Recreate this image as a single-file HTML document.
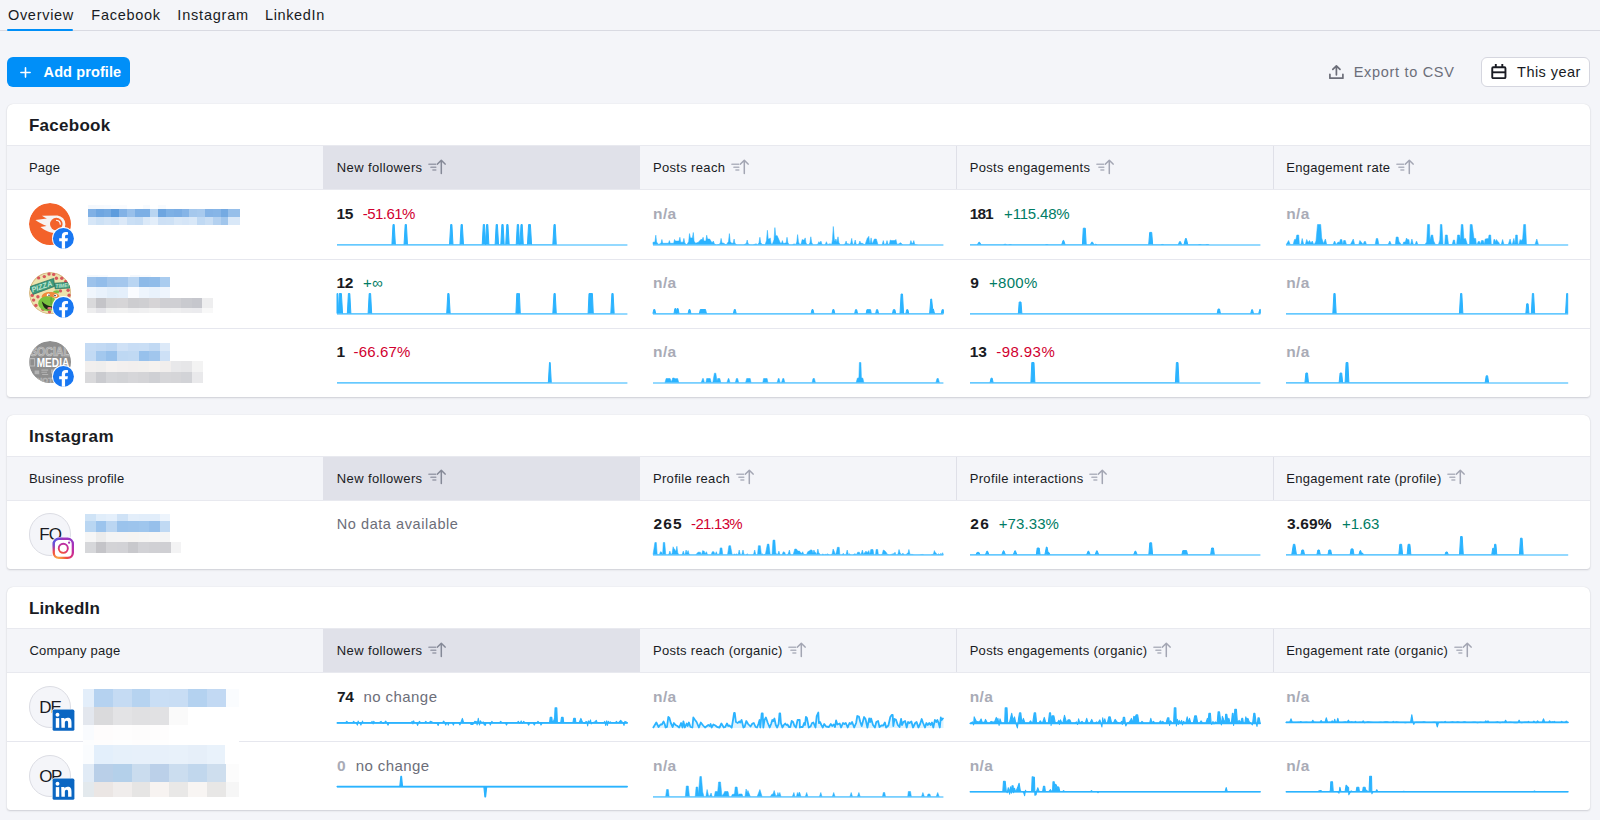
<!DOCTYPE html>
<html lang="en"><head><meta charset="utf-8"><title>Social Analytics – Overview</title>
<style>
*{box-sizing:border-box;margin:0;padding:0}
html,body{width:1600px;height:820px;overflow:hidden}
body{background:#f4f5f9;font-family:"Liberation Sans",sans-serif;color:#191b23;position:relative}
button{font-family:inherit;cursor:pointer}
.abs{position:absolute;white-space:nowrap}
.t{position:absolute;white-space:nowrap}
.b{font-weight:bold}
.tabs{position:absolute;left:0;top:0;width:1600px;height:31px;border-bottom:1px solid #d9dae2}
.tabs .on-line{position:absolute;left:7px;width:66.3px;top:29px;height:2px;background:#008ff8;border-radius:1px}
.btn-add{position:absolute;left:7px;top:57px;width:123.2px;height:30px;border-radius:6px;background:#008ff8;color:#fff;border:0}
.btn-year{position:absolute;left:1481px;top:57px;width:109px;height:30px;border-radius:6px;background:#fff;border:1px solid #d5d6df}
.card{position:absolute;left:6.9px;width:1583.4px;background:#fff;border-radius:6px 6px 3px 3px;box-shadow:0 1px 2px rgba(25,27,35,.16),0 0 1px rgba(25,27,35,.14)}
.thead{position:absolute;left:0;top:41.2px;width:100%;height:45px;background:#f4f5f9;border-top:1px solid #e8e9ef;border-bottom:1px solid #e8e9ef}
.th{position:absolute;top:0;height:43px;border-left:1px solid #dfe0e8}
.th.first{border-left:0}
.th.sorted{background:#e0e1e9;border-left:0}
.th.nb{border-left-color:transparent}
.row{position:absolute;left:0;width:100%;height:69.2px;border-top:1px solid #e6e7ee}
.row.r0{border-top:0}
.red{color:#d1002f}.grn{color:#007c65}.gry{color:#6c6e79}.na{color:#a9abb6}
.spark{position:absolute;overflow:visible}
.av{position:absolute;border-radius:50%}
.av.txt{background:#f4f5f9;border:1px solid #dcdde4}
.badge{position:absolute}
.blur{position:absolute}
</style></head><body><svg width="0" height="0" style="position:absolute"><defs><clipPath id="ab"><rect x="-2" y="-3" width="300" height="23.500"/></clipPath></defs></svg>
<nav class="tabs">
<a class="t" style="left:7.92px;top:5.10px;font-size:14.5px;line-height:20px;height:20px;letter-spacing:0.711px">Overview</a>
<a class="t" style="left:91.37px;top:5.10px;font-size:14.5px;line-height:20px;height:20px;letter-spacing:0.718px">Facebook</a>
<a class="t" style="left:177.37px;top:5.10px;font-size:14.5px;line-height:20px;height:20px;letter-spacing:0.789px">Instagram</a>
<a class="t" style="left:264.97px;top:5.10px;font-size:14.5px;line-height:20px;height:20px;letter-spacing:0.632px">LinkedIn</a>
<i class="on-line"></i>
</nav>
<button class="btn-add"><svg class="abs" style="left:13.1px;top:9.6px" width="11" height="11" viewBox="0 0 11 11"><path d="M5.500 .9v9.200M.9 5.500h9.200" stroke="#fff" stroke-width="1.600" stroke-linecap="round"/></svg><span class="t b" style="left:36.57px;top:5.10px;font-size:14.5px;line-height:20px;height:20px;letter-spacing:0.107px">Add profile</span></button>
<div class="abs" style="left:1328px;top:62px;width:130px;height:20px;color:#6c6e79"><svg class="abs" style="left:0;top:2px" width="17" height="16" viewBox="0 0 17 16"><g fill="none" stroke="#6c6e79" stroke-width="1.7" stroke-linecap="round" stroke-linejoin="round"><path d="M1.900 10.300v3.900h13v-3.900"/><path d="M8.400 10.800V1.800M4.800 5.400l3.600-3.600 3.600 3.600"/></g></svg><span class="t" style="left:25.67px;top:0.10px;font-size:14.5px;line-height:20px;height:20px;letter-spacing:0.699px">Export to CSV</span></div>
<button class="btn-year"><svg class="abs" style="left:9px;top:5px" width="17" height="18" viewBox="0 0 17 18"><g fill="none" stroke="#191b23" stroke-width="1.9" stroke-linejoin="round"><rect x="1.250" y="4.200" width="13.200" height="10.950" rx="1"/><path d="M1.250 9.300h13.200"/><path d="M4.800 .9v3.300M11.300 .9v3.300"/></g></svg><span class="t" style="left:35.07px;top:4.10px;font-size:14.5px;line-height:20px;height:20px;letter-spacing:0.459px;color:#191b23">This year</span></button>
<section class="card" style="top:104px;height:292.9px"><h2 style="font-weight:normal;font-size:inherit"><span class="t b" style="left:22.04px;top:10.10px;font-size:17px;line-height:23px;height:23px;letter-spacing:0.271px">Facebook</span></h2><div class="thead"><div class="th first" style="left:0px;width:316.4px"><span class="t" style="left:22.08px;top:11.90px;font-size:13px;line-height:19px;height:19px;letter-spacing:0.194px">Page</span></div><div class="th sorted" style="left:316.4px;width:316.5px"><span class="t" style="left:13.58px;top:11.90px;font-size:13px;line-height:19px;height:19px;letter-spacing:0.359px">New followers</span><svg class="abs" style="left:104.6px;top:12.7px" width="19" height="16" viewBox="0 0 19 16"><g fill="none" stroke-linecap="round" stroke-linejoin="round"><path d="M.9 5.300h6.900M2.900 8.200h4.900M4.900 11.100h2.900" stroke="#9a9dab" stroke-width="1.500"/><path d="M13.300 14.600V1.400M9.500 5.100l3.800-3.900 3.800 3.900" stroke="#858997" stroke-width="1.500"/></g></svg></div><div class="th nb" style="left:632.9px;width:316.7px"><span class="t" style="left:12.18px;top:11.90px;font-size:13px;line-height:19px;height:19px;letter-spacing:0.340px">Posts reach</span><svg class="abs" style="left:90.1px;top:12.7px" width="19" height="16" viewBox="0 0 19 16"><g fill="none" stroke-linecap="round" stroke-linejoin="round"><path d="M.9 5.300h6.900M2.900 8.200h4.900M4.900 11.100h2.900" stroke="#b0b3bf" stroke-width="1.500"/><path d="M13.300 14.600V1.400M9.500 5.100l3.800-3.900 3.800 3.900" stroke="#a3a6b3" stroke-width="1.500"/></g></svg></div><div class="th" style="left:949.6px;width:316.5px"><span class="t" style="left:12.18px;top:11.90px;font-size:13px;line-height:19px;height:19px;letter-spacing:0.339px">Posts engagements</span><svg class="abs" style="left:138.7px;top:12.7px" width="19" height="16" viewBox="0 0 19 16"><g fill="none" stroke-linecap="round" stroke-linejoin="round"><path d="M.9 5.300h6.900M2.900 8.200h4.900M4.900 11.100h2.900" stroke="#b0b3bf" stroke-width="1.500"/><path d="M13.300 14.600V1.400M9.500 5.100l3.800-3.900 3.800 3.900" stroke="#a3a6b3" stroke-width="1.500"/></g></svg></div><div class="th" style="left:1266.1px;width:317.2px"><span class="t" style="left:12.18px;top:11.90px;font-size:13px;line-height:19px;height:19px;letter-spacing:0.301px">Engagement rate</span><svg class="abs" style="left:122.2px;top:12.7px" width="19" height="16" viewBox="0 0 19 16"><g fill="none" stroke-linecap="round" stroke-linejoin="round"><path d="M.9 5.300h6.900M2.900 8.200h4.900M4.900 11.100h2.900" stroke="#b0b3bf" stroke-width="1.500"/><path d="M13.300 14.600V1.400M9.500 5.100l3.800-3.900 3.800 3.900" stroke="#a3a6b3" stroke-width="1.500"/></g></svg></div></div><div class="row r0" style="top:86.2px"><div class="abs" style="left:0;top:-0.5px"><svg class="av" style="left:21.8px;top:13.1px" width="42.3" height="42.3" viewBox="0 0 42.3 42.3"><defs><clipPath id="avc"><circle cx="21.15" cy="21.15" r="21.15"/></clipPath></defs><g clip-path="url(#avc)"><rect width="43" height="43" fill="#f3622a"/><path d="M12.9 12.7L28.4 12.4A8.9 8.9 0 0 1 36.4 21.3A8.8 8.8 0 0 1 27.6 30.3C22 30.3 15.6 27.6 11.4 24.1L17.6 22.9C13.6 21.6 9.6 19.4 6.4 17L17.9 15.6C16.2 14.8 14.4 13.8 12.9 12.7Z" fill="#f7f3f1"/><circle cx="27.3" cy="21.1" r="6.3" fill="#f3622a"/><path d="M27.6 17.3a4 4 0 0 1 3.7 3.9" fill="none" stroke="#fbeee8" stroke-width="1.3" stroke-linecap="round"/></g></svg><svg class="badge" style="left:45.0px;top:36.9px" width="22.8" height="22.8" viewBox="0 0 24 24"><circle cx="12" cy="12" r="12" fill="#fff"/><circle cx="12" cy="12" r="11.05" fill="#1877f2"/><path d="M13.750 23v-8h2.550l.48-3.100h-3.030v-2c0-.85.420-1.680 1.750-1.680h1.380v-2.640s-1.250-.21-2.440-.21c-2.490 0-4.120 1.510-4.120 4.240v2.290h-2.770v3.100h2.770v8z" fill="#fff"/></svg><i class="blur" style="left:80.8px;top:15.8px;width:78.0px;height:3.6px;background:linear-gradient(90deg,#f4f8fd 0.0px 7.8px,#f6f9fd 7.8px 15.6px,#f7fafe 15.6px 23.4px,#fbfcfe 23.4px 31.2px,#f9fbfe 31.2px 39.0px,#ffffff 39.0px 46.8px,#ffffff 46.8px 54.6px,#f8fbfe 54.6px 62.4px,#ffffff 62.4px 70.2px,#f8fbfe 70.2px 78.0px)"></i><i class="blur" style="left:80.8px;top:19.3px;width:152.1px;height:8.2px;background:linear-gradient(90deg,#7fb0e5 0.0px 7.8px,#6ea6e1 7.8px 15.6px,#74aae2 15.6px 23.4px,#5d9cdd 23.4px 31.2px,#82b2e6 31.2px 39.0px,#98c0eb 39.0px 46.8px,#7cafe5 46.8px 54.6px,#7cafe5 54.6px 62.4px,#b9d5f1 62.4px 70.2px,#6da5e0 70.2px 78.0px,#7db0e5 78.0px 85.8px,#7aade4 85.8px 93.6px,#85b4e7 93.6px 101.4px,#a5c8ed 101.4px 109.2px,#a8caee 109.2px 117.0px,#84b3e6 117.0px 124.8px,#86b5e7 124.8px 132.6px,#74aae2 132.6px 140.4px,#96bfea 140.4px 148.2px,#96bfea 148.2px 152.1px)"></i><i class="blur" style="left:80.8px;top:27.5px;width:152.1px;height:7.5px;background:linear-gradient(90deg,#d6e6f7 0.0px 7.8px,#cde1f5 7.8px 15.6px,#d3e4f6 15.6px 23.4px,#cfe2f6 23.4px 31.2px,#dce9f8 31.2px 39.0px,#cadff5 39.0px 46.8px,#c7ddf4 46.8px 54.6px,#dbe9f8 54.6px 62.4px,#e3eefa 62.4px 70.2px,#cde0f5 70.2px 78.0px,#cee1f5 78.0px 85.8px,#d8e7f7 85.8px 93.6px,#d5e5f7 93.6px 101.4px,#d9e8f8 101.4px 109.2px,#c0d9f3 109.2px 117.0px,#c9def4 117.0px 124.8px,#b4d1f0 124.8px 132.6px,#a1c6ec 132.6px 140.4px,#d9e8f8 140.4px 148.2px,#d9e8f8 148.2px 152.1px)"></i></div><span class="t b" style="left:329.73px;top:12.90px;font-size:15.5px;line-height:21px;height:21px;letter-spacing:-0.586px">15</span><span class="t red" style="left:355.93px;top:12.90px;font-size:15px;line-height:21px;height:21px;letter-spacing:-0.542px">-51.61%</span><svg class="spark" style="left:329.7px;top:33.6px" width="291" height="29" viewBox="0 0 291 29"><path d="M0.0 21.0L54.9 21.0L56.0 0.5L57.2 0.5L58.4 21.0L67.0 21.0L68.2 0.5L69.4 0.5L70.5 21.0L112.5 21.0L113.7 0.5L114.9 0.5L116.0 21.0L123.0 21.0L124.1 0.5L125.3 0.5L126.5 21.0L145.2 21.0L146.3 0.5L147.5 0.5L148.6 21.0L148.5 21.0L149.6 0.5L150.8 0.5L151.9 21.0L158.1 21.0L159.2 0.5L160.4 0.5L161.6 21.0L163.8 21.0L164.9 0.5L166.1 0.5L167.2 21.0L168.7 21.0L169.8 0.5L171.0 0.5L172.2 21.0L179.2 21.0L180.3 0.5L181.5 0.5L182.6 21.0L182.9 21.0L184.0 0.5L185.2 0.5L186.3 21.0L190.4 21.0L191.6 0.5L193.4 0.5L194.6 21.0L215.8 21.0L217.0 0.5L218.2 0.5L219.3 21.0L219.3 21L0.0 21Z" fill="#2bb3ff" stroke="#2bb3ff" stroke-width="1.0" stroke-linejoin="round" clip-path="url(#ab)"/><path d="M0 21H290.4" stroke="#2bb3ff" stroke-width="1.2" fill="none"/></svg><span class="t b na" style="left:646.23px;top:12.90px;font-size:15.5px;line-height:21px;height:21px;letter-spacing:0.338px">n/a</span><svg class="spark" style="left:646.2px;top:33.6px" width="291" height="29" viewBox="0 0 291 29"><path d="M-0.0 18.2L1.9 18.1L2.8 11.2L3.6 18.1L5.6 20.4L8.0 19.3L8.9 15.5L9.7 19.3L11.7 19.3L15.5 19.3L16.4 16.6L17.2 19.3L18.7 19.3L20.7 19.3L21.5 15.5L22.4 17.1L23.9 17.1L26.0 17.1L26.9 13.3L27.7 18.2L29.0 18.2L30.1 18.2L30.9 14.4L31.8 19.0L33.7 21.0L35.7 17.6L36.5 9.6L37.4 13.9L38.4 13.9L39.4 13.9L40.3 8.5L41.1 17.2L42.6 19.3L45.4 18.2L47.8 15.5L49.3 15.5L50.1 13.3L51.0 17.1L52.0 17.1L52.8 17.1L53.7 11.2L54.5 15.0L55.3 15.0L56.7 15.0L58.6 18.2L59.6 18.2L60.4 17.1L61.3 19.8L63.3 21.0L66.1 20.4L67.3 19.0L68.1 14.4L69.0 19.0L70.8 19.3L73.1 21.0L75.5 17.6L76.4 9.6L77.2 17.6L78.7 19.3L80.2 19.2L81.1 15.0L81.9 19.2L83.9 21.0L87.2 20.9L90.4 21.0L93.3 19.5L94.2 16.0L95.0 19.5L97.0 20.9L99.8 21.0L103.1 19.8L104.5 20.9L106.0 18.7L106.9 13.3L107.7 18.7L109.2 20.4L112.0 21.0L113.5 16.6L114.4 6.3L115.2 15.0L115.8 15.0L116.3 15.0L117.2 13.9L118.0 18.9L119.0 21.0L121.0 15.8L121.9 3.6L122.7 11.7L124.2 11.7L126.5 17.1L127.5 19.3L128.5 19.3L129.4 16.6L130.2 19.3L131.7 19.3L133.2 18.7L134.0 13.3L134.9 18.7L136.4 21.0L139.2 20.9L141.1 19.8L142.5 21.0L143.8 17.9L144.6 10.6L145.5 17.9L146.9 21.0L148.3 19.3L149.2 15.5L150.0 16.0L150.6 16.0L151.3 16.0L152.2 13.9L153.0 18.9L154.4 20.9L155.8 20.9L157.0 18.5L157.8 12.8L158.7 18.5L160.0 21.0L163.3 21.0L165.0 20.0L165.9 17.7L166.8 19.3L167.9 17.1L168.8 19.8L169.8 21.0L171.7 21.0L172.5 20.0L173.4 17.7L174.2 20.0L175.0 20.4L176.9 19.8L178.7 20.4L179.5 15.5L180.3 2.5L181.5 17.1L182.1 17.1L182.9 15.0L183.9 18.2L185.0 12.8L185.9 18.5L187.2 20.9L190.4 20.9L192.2 19.8L193.1 17.1L193.9 19.8L195.1 19.8L197.0 20.4L197.8 19.0L198.7 14.4L199.5 19.0L200.3 21.0L201.3 19.5L202.2 16.0L203.0 19.5L204.0 21.0L206.0 19.8L206.9 17.1L207.7 19.3L209.2 19.3L212.0 20.9L214.4 13.9L214.9 13.9L215.8 12.3L216.6 18.4L217.2 19.3L218.1 13.9L219.0 18.9L219.5 19.3L221.4 15.0L223.3 15.0L225.1 21.0L228.9 21.0L229.4 19.7L230.3 16.6L231.1 19.7L231.7 20.4L233.2 19.7L234.0 16.6L234.9 19.7L235.4 20.4L236.5 19.5L237.3 16.0L238.2 16.6L239.7 16.6L242.1 16.6L242.9 15.5L243.8 19.3L244.8 20.4L247.6 18.7L250.0 21.0L251.9 21.0L253.7 21.0L256.5 21.0L257.1 19.7L257.9 16.6L258.8 19.3L259.4 19.3L259.9 19.3L260.8 16.6L261.6 19.7L262.6 20.9L264.5 21.0L264.5 21L-0.0 21Z" fill="#2bb3ff" stroke="#2bb3ff" stroke-width="0.55" stroke-linejoin="round" clip-path="url(#ab)"/><path d="M0 21H290.4" stroke="#2bb3ff" stroke-width="1.2" fill="none"/></svg><span class="t b" style="left:962.93px;top:12.90px;font-size:15.5px;line-height:21px;height:21px;letter-spacing:-1.003px">181</span><span class="t grn" style="left:997.20px;top:12.90px;font-size:15px;line-height:21px;height:21px;letter-spacing:-0.188px">+115.48%</span><svg class="spark" style="left:962.9px;top:33.6px" width="291" height="29" viewBox="0 0 291 29"><path d="M0.0 21.0L7.2 21.0L8.9 18.2L9.5 18.2L11.2 21.0L33.1 21.0L34.8 20.3L35.4 20.3L37.1 21.0L38.1 21.0L39.8 20.5L40.4 20.5L42.1 21.0L74.8 21.0L76.5 20.5L77.1 20.5L78.8 21.0L91.6 21.0L93.1 16.4L93.7 16.4L95.2 21.0L112.4 21.0L113.3 4.2L115.3 4.2L116.2 21.0L120.3 21.0L121.6 18.2L122.6 18.2L123.9 21.0L124.3 21.0L125.5 20.3L126.1 20.3L127.3 21.0L178.7 21.0L179.7 8.4L181.7 8.4L182.7 21.0L190.4 21.0L192.1 20.5L192.7 20.5L194.4 21.0L208.3 21.0L209.5 17.7L210.5 17.7L211.7 21.0L213.9 21.0L215.5 14.5L216.3 14.5L217.9 21.0L227.9 21.0L229.6 20.5L230.2 20.5L231.9 21.0L235.3 21.0L237.0 20.5L237.6 20.5L239.3 21.0L239.3 21L0.0 21Z" fill="#2bb3ff" stroke="#2bb3ff" stroke-width="1.0" stroke-linejoin="round" clip-path="url(#ab)"/><path d="M0 21H290.4" stroke="#2bb3ff" stroke-width="1.2" fill="none"/></svg><span class="t b na" style="left:1279.43px;top:12.90px;font-size:15.5px;line-height:21px;height:21px;letter-spacing:0.338px">n/a</span><svg class="spark" style="left:1279.4px;top:33.6px" width="283" height="29" viewBox="0 0 283 29"><path d="M0.0 21.0L2.6 16.5L4.3 20.7L7.1 20.7L8.5 15.5L9.9 15.5L10.8 11.0L12.7 11.0L13.4 20.5L14.9 20.5L16.2 14.5L17.7 20.5L19.3 20.5L20.7 15.5L22.1 18.5L23.5 16.5L24.9 19.0L26.3 17.0L27.7 20.5L28.6 20.0L30.0 17.0L31.5 0.5L34.7 0.5L35.7 14.0L37.5 19.5L39.4 15.0L40.8 20.7L46.9 20.7L48.6 17.0L50.2 20.5L52.1 18.0L53.5 18.5L54.4 15.5L55.8 15.5L56.8 20.5L57.7 16.5L59.3 16.5L60.5 20.7L64.3 20.7L67.3 15.0L68.7 20.7L72.7 20.7L73.9 16.5L76.0 19.0L77.1 20.5L78.3 17.5L79.5 17.5L80.5 20.7L89.1 20.7L90.3 14.5L91.7 14.5L93.0 20.7L102.0 20.7L103.8 17.0L105.5 20.7L109.3 20.7L110.2 13.0L112.1 13.0L113.0 17.5L115.4 20.7L116.8 20.7L117.7 18.0L119.3 18.0L120.5 14.0L121.9 16.0L122.9 15.5L123.6 20.5L124.5 20.5L125.9 15.0L127.4 20.7L129.0 20.7L130.5 17.0L132.0 20.7L138.8 20.7L140.7 18.0L141.6 0.5L143.5 0.5L143.9 16.0L145.3 11.0L146.7 11.0L147.7 17.0L149.5 20.7L152.4 20.7L153.8 16.0L154.4 0.5L155.9 0.5L157.0 20.5L158.7 20.5L159.4 11.0L161.3 11.0L162.5 20.5L166.2 20.5L167.4 16.0L168.5 16.0L169.4 20.5L170.6 20.5L171.6 11.0L173.5 11.0L174.4 16.0L175.3 0.5L176.9 0.5L177.9 15.0L179.5 14.5L181.4 20.5L183.5 20.5L184.2 0.5L186.1 0.5L188.0 14.5L189.7 14.5L190.3 20.0L191.3 20.0L192.2 17.5L193.6 17.5L194.5 20.2L195.5 16.5L197.2 16.5L198.3 20.2L199.2 15.0L202.5 14.5L203.0 11.0L204.7 11.0L205.3 20.5L207.2 20.5L207.9 15.5L208.8 15.5L209.5 18.0L210.5 15.5L211.4 17.0L212.8 18.5L213.8 20.7L215.2 20.7L216.6 15.5L218.0 20.7L222.2 20.7L224.1 15.0L225.5 20.5L226.4 20.0L227.8 14.5L229.0 20.0L229.7 11.0L231.3 11.0L232.0 20.5L233.0 20.0L234.1 15.5L235.3 17.0L236.7 14.5L237.7 0.5L239.5 0.5L240.5 20.7L248.9 20.7L250.8 15.0L252.5 20.7L252.5 21L0.0 21Z" fill="#2bb3ff" stroke="#2bb3ff" stroke-width="0.55" stroke-linejoin="round" clip-path="url(#ab)"/><path d="M0 21H282.2" stroke="#2bb3ff" stroke-width="1.2" fill="none"/></svg></div><div class="row r1" style="top:154.6px"><div class="abs" style="left:0;top:-0.7px"><svg class="av" style="left:21.8px;top:13.1px" width="42.3" height="42.3" viewBox="0 0 42.3 42.3"><defs><clipPath id="avc"><circle cx="21.15" cy="21.15" r="21.15"/></clipPath></defs><g clip-path="url(#avc)"><rect width="43" height="43" fill="#ece4ad"/><circle cx="21.15" cy="21.15" r="20.6" fill="none" stroke="#d9b98a" stroke-width="1.2"/><circle cx="24.7" cy="2.4" r="1.7" fill="#d8585c"/><circle cx="15.3" cy="4.6" r="1.7" fill="#d8585c"/><circle cx="9.6" cy="5.9" r="1.7" fill="#d8585c"/><circle cx="27.4" cy="6.3" r="1.7" fill="#d8585c"/><circle cx="32.8" cy="6.3" r="1.7" fill="#d8585c"/><circle cx="36.8" cy="9.5" r="1.7" fill="#d8585c"/><circle cx="39.1" cy="18.3" r="1.7" fill="#d8585c"/><circle cx="40.1" cy="23.2" r="1.7" fill="#d8585c"/><circle cx="4.6" cy="28.1" r="1.7" fill="#d8585c"/><circle cx="6.9" cy="33.4" r="1.7" fill="#d8585c"/><circle cx="14" cy="37.3" r="1.7" fill="#d8585c"/><circle cx="8.9" cy="24.7" r="1.7" fill="#d8585c"/><circle cx="3.2" cy="23.4" r="1.7" fill="#d8585c"/><circle cx="31.4" cy="18.9" r="1.7" fill="#d8585c"/><circle cx="20.5" cy="39.8" r="1.7" fill="#d8585c"/><circle cx="35.5" cy="27" r="1.7" fill="#d8585c"/><circle cx="2.4" cy="16.5" r="1.7" fill="#d8585c"/><circle cx="20" cy="2" r="1.7" fill="#d8585c"/><path d="M.4 14.8L24.7 6.4L25.6 14.4L4.2 22.4Z" fill="#3c9a7c" stroke="#2f6f5c" stroke-width=".7"/><path d="M25.4 11.2L41.2 10.2L41.2 16L26.2 16.9Z" fill="#3c9a7c" stroke="#2f6f5c" stroke-width=".7"/><text transform="translate(3.4 20.6) rotate(-19)" font-family="Liberation Sans,sans-serif" font-weight="bold" font-style="italic" font-size="7.6" fill="#bfe5d2" textLength="21.5" lengthAdjust="spacingAndGlyphs">PIZZA</text><text transform="translate(26.6 15.9) rotate(-3.5)" font-family="Liberation Sans,sans-serif" font-weight="bold" font-style="italic" font-size="5.6" fill="#bfe5d2" textLength="13.6" lengthAdjust="spacingAndGlyphs">TIME!</text><path d="M23.6 20.6c1.2-2.2 4.4-3 7-1.6l-1.2 2.4z" fill="#7bc043"/><path d="M12.6 24.8c.6-3.2 3.6-4.8 8.4-4.8s8.400 1.400 9.400 4.200l-.6 2.400c-5-1.600-11.800-1.600-16.600.400z" fill="#ef8a3c"/><ellipse cx="19.4" cy="23.100" rx="1.7" ry="1.5" fill="#fff"/><ellipse cx="26.500" cy="23.400" rx="1.700" ry="1.500" fill="#fff"/><circle cx="20" cy="23.300" r=".7" fill="#222"/><circle cx="26" cy="23.600" r=".8" fill="#222"/><ellipse cx="18.600" cy="31.600" rx="9.400" ry="7.400" fill="#7ac23f"/><path d="M22.1 25.500v7.500" stroke="#5f9a36" stroke-width="1"/><path d="M12.800 29.200c3 3.400 7.600 5.400 11.600 5.400c-1.200 2.200-3.400 3.200-5.600 3c-3-.4-5.200-4-6-8.400z" fill="#1f2a18"/><ellipse cx="20.600" cy="36.200" rx="2.300" ry="1.200" fill="#e8737c"/></g></svg><svg class="badge" style="left:45.0px;top:36.9px" width="22.8" height="22.8" viewBox="0 0 24 24"><circle cx="12" cy="12" r="12" fill="#fff"/><circle cx="12" cy="12" r="11.05" fill="#1877f2"/><path d="M13.750 23v-8h2.550l.48-3.100h-3.030v-2c0-.85.420-1.680 1.750-1.680h1.380v-2.640s-1.250-.21-2.440-.21c-2.490 0-4.120 1.510-4.120 4.240v2.290h-2.770v3.100h2.770v8z" fill="#fff"/></svg><i class="blur" style="left:80.2px;top:15.9px;width:64.2px;height:2.5px;background:linear-gradient(90deg,#f3f8fd 0.0px 10.7px,#f7fafe 10.7px 21.4px,#ffffff 21.4px 32.1px,#ffffff 32.1px 42.8px,#f4f8fd 42.8px 53.5px,#f9fbfe 53.5px 64.2px)"></i><i class="blur" style="left:80.2px;top:18.3px;width:83.1px;height:9.6px;background:linear-gradient(90deg,#9cc2eb 0.0px 8.8px,#93bdea 8.8px 19.5px,#a3c6ec 19.5px 30.2px,#a4c7ed 30.2px 40.9px,#b9d5f2 40.9px 51.6px,#8dbae8 51.6px 62.3px,#90bce9 62.3px 73.0px,#aaccef 73.0px 83.1px)"></i><i class="blur" style="left:80.2px;top:27.9px;width:83.1px;height:11.0px;background:linear-gradient(90deg,#f0f6fd 0.0px 8.8px,#e9f2fc 8.8px 19.5px,#e2eefa 19.5px 30.2px,#e4effb 30.2px 40.9px,#fafcff 40.9px 51.6px,#eef5fd 51.6px 62.3px,#e9f2fc 62.3px 73.0px,#eff5fd 73.0px 83.1px)"></i><i class="blur" style="left:80.2px;top:38.9px;width:125.5px;height:10.5px;background:linear-gradient(90deg,#d9d9db 0.0px 8.8px,#c4c4c8 8.8px 19.5px,#d4d4d6 19.5px 30.2px,#d6d5d7 30.2px 40.9px,#cdcdd0 40.9px 51.6px,#cfcfd2 51.6px 62.3px,#d6d4d6 62.3px 73.0px,#cfcfd3 73.0px 83.7px,#cfcfd3 83.7px 94.4px,#c9cacf 94.4px 105.1px,#c6c7cd 105.1px 115.1px,#eeeeef 115.1px 125.5px)"></i><i class="blur" style="left:80.2px;top:49.4px;width:125.5px;height:5.2px;background:linear-gradient(90deg,#ededee 0.0px 8.8px,#e4e4e8 8.8px 19.5px,#eff0f0 19.5px 30.2px,#f1f1f1 30.2px 40.9px,#eeeeef 40.9px 51.6px,#f0f0f1 51.6px 62.3px,#f3f3f3 62.3px 73.0px,#eeeeef 73.0px 83.7px,#efeff0 83.7px 94.4px,#ececee 94.4px 105.1px,#ebebee 105.1px 115.1px,#f8f8f8 115.1px 125.5px)"></i></div><span class="t b" style="left:329.73px;top:12.50px;font-size:15.5px;line-height:21px;height:21px;letter-spacing:-0.586px">12</span><span class="t grn" style="left:356.00px;top:12.50px;font-size:15px;line-height:21px;height:21px;letter-spacing:0.365px">+∞</span><svg class="spark" style="left:329.7px;top:33.4px" width="291" height="29" viewBox="0 0 291 29"><path d="M0.0 21.0L0.0 0.5L0.7 0.5L1.5 20.0L2.3 0.5L4.4 0.5L5.6 21.0L10.3 21.0L11.4 0.5L12.8 0.5L13.9 21.0L31.1 21.0L32.2 0.5L33.6 0.5L34.7 21.0L109.7 21.0L110.8 0.5L112.0 0.5L113.2 21.0L178.9 21.0L179.8 0.5L180.8 0.5L181.7 21.0L180.5 21.0L181.4 0.5L182.4 0.5L183.3 21.0L215.8 21.0L217.0 0.5L218.2 0.5L219.3 21.0L251.1 21.0L252.0 0.5L255.4 0.5L256.3 21.0L273.8 21.0L274.9 0.5L276.1 0.5L277.2 21.0L277.2 21L0.0 21Z" fill="#2bb3ff" stroke="#2bb3ff" stroke-width="1.0" stroke-linejoin="round" clip-path="url(#ab)"/><path d="M0 21H290.4" stroke="#2bb3ff" stroke-width="1.2" fill="none"/></svg><span class="t b na" style="left:646.23px;top:12.50px;font-size:15.5px;line-height:21px;height:21px;letter-spacing:0.338px">n/a</span><svg class="spark" style="left:646.2px;top:33.4px" width="291" height="29" viewBox="0 0 291 29"><path d="M0.0 21.0L-0.2 21.0L0.8 16.5L1.8 16.5L2.8 21.0L20.9 21.0L21.9 15.6L22.9 15.6L23.9 21.0L23.1 21.0L24.1 15.6L25.1 15.6L26.1 21.0L35.0 21.0L36.0 16.5L37.0 16.5L38.0 21.0L46.3 21.0L47.3 16.5L52.5 16.5L53.5 21.0L80.3 21.0L81.3 16.5L82.3 16.5L83.3 21.0L158.0 21.0L159.0 16.5L160.0 16.5L161.0 21.0L178.9 21.0L179.9 16.5L180.9 16.5L181.9 21.0L201.6 21.0L202.5 16.7L203.7 16.7L204.6 21.0L213.1 21.0L213.9 16.7L217.5 16.7L218.3 21.0L222.6 21.0L223.5 16.7L224.7 16.7L225.6 21.0L239.4 21.0L240.3 16.7L241.9 16.7L242.8 21.0L247.0 21.0L248.1 1.0L249.5 1.0L250.6 21.0L252.8 21.0L253.7 16.7L254.9 16.7L255.8 21.0L276.6 21.0L277.8 6.0L278.6 6.0L279.6 15.6L280.4 16.0L281.6 21.0L288.2 21.0L289.1 16.7L290.4 16.7L290.4 21.0L290.4 21L0.0 21Z" fill="#2bb3ff" stroke="#2bb3ff" stroke-width="1.0" stroke-linejoin="round" clip-path="url(#ab)"/><path d="M0 21H290.4" stroke="#2bb3ff" stroke-width="1.2" fill="none"/></svg><span class="t b" style="left:963.42px;top:12.50px;font-size:15.5px;line-height:21px;height:21px">9</span><span class="t grn" style="left:982.20px;top:12.50px;font-size:15px;line-height:21px;height:21px;letter-spacing:0.281px">+800%</span><svg class="spark" style="left:962.9px;top:33.4px" width="291" height="29" viewBox="0 0 291 29"><path d="M0.0 21.0L48.3 21.0L49.2 9.0L51.0 9.0L51.9 21.0L247.1 21.0L248.1 16.0L249.5 16.0L250.5 21.0L280.6 21.0L281.7 16.7L282.5 16.7L283.6 21.0L288.6 21.0L289.8 16.4L290.3 16.4L290.3 21.0L290.3 21L0.0 21Z" fill="#2bb3ff" stroke="#2bb3ff" stroke-width="1.0" stroke-linejoin="round" clip-path="url(#ab)"/><path d="M0 21H290.4" stroke="#2bb3ff" stroke-width="1.2" fill="none"/></svg><span class="t b na" style="left:1279.43px;top:12.50px;font-size:15.5px;line-height:21px;height:21px;letter-spacing:0.338px">n/a</span><svg class="spark" style="left:1279.4px;top:33.4px" width="283" height="29" viewBox="0 0 283 29"><path d="M0.0 21.0L46.8 21.0L47.9 0.5L49.1 0.5L50.2 21.0L173.4 21.0L174.6 0.5L175.8 0.5L176.9 21.0L239.8 21.0L240.7 10.8L242.1 10.8L243.0 21.0L245.3 21.0L246.4 0.5L247.6 0.5L248.7 21.0L279.5 21.0L280.7 0.5L281.7 0.5L281.7 21.0L281.7 21L0.0 21Z" fill="#2bb3ff" stroke="#2bb3ff" stroke-width="1.0" stroke-linejoin="round" clip-path="url(#ab)"/><path d="M0 21H282.2" stroke="#2bb3ff" stroke-width="1.2" fill="none"/></svg></div><div class="row r2" style="top:223.9px"><div class="abs" style="left:0;top:-0.8px"><svg class="av" style="left:21.8px;top:13.1px" width="42.3" height="42.3" viewBox="0 0 42.3 42.3"><defs><clipPath id="avc"><circle cx="21.15" cy="21.15" r="21.15"/></clipPath></defs><g clip-path="url(#avc)"><rect width="43" height="43" fill="#8e8e8e"/><text x="1.0" y="14.7" font-family="Liberation Sans,sans-serif" font-weight="bold" font-size="12.2" fill="#9f9f9f" stroke="#c6c6c6" stroke-width=".7" textLength="40" lengthAdjust="spacingAndGlyphs">SOCIAL</text><text x="7.7" y="26.1" font-family="Liberation Sans,sans-serif" font-weight="bold" font-size="13.1" fill="#fff" textLength="32.6" lengthAdjust="spacingAndGlyphs">MEDIA</text><path d="M.8 17.6h4.8v7.400h-4.800z" fill="none" stroke="#b9b9b9" stroke-width="1.1"/><path d="M5.600 29.600h4.600v3.600h-4.600zM12.400 28.600h6.800v1.100h-6.800zM12.400 30.700h5.600v1.100h-5.600zM13.200 32.900h6v1h-6zM22 28.600h3.400v4h-3.400z" fill="#b3b3b3"/><text x="7.800" y="41.600" font-family="Liberation Sans,sans-serif" font-weight="bold" font-size="7.400" fill="#aaa" stroke="#bdbdbd" stroke-width=".4" textLength="16" lengthAdjust="spacingAndGlyphs">NOT</text></g></svg><svg class="badge" style="left:45.0px;top:36.9px" width="22.8" height="22.8" viewBox="0 0 24 24"><circle cx="12" cy="12" r="12" fill="#fff"/><circle cx="12" cy="12" r="11.05" fill="#1877f2"/><path d="M13.750 23v-8h2.550l.48-3.100h-3.030v-2c0-.85.420-1.680 1.750-1.680h1.380v-2.640s-1.250-.21-2.440-.21c-2.490 0-4.120 1.510-4.120 4.240v2.290h-2.770v3.100h2.770v8z" fill="#fff"/></svg><i class="blur" style="left:78.0px;top:15.1px;width:85.6px;height:7.8px;background:linear-gradient(90deg,#c5dbf4 0.0px 10.7px,#c2d9f3 10.7px 21.4px,#bdd6f2 21.4px 32.1px,#cfe1f6 32.1px 42.8px,#c8ddf5 42.8px 53.5px,#c9def5 53.5px 64.2px,#c1d9f3 64.2px 74.9px,#dce9f8 74.9px 85.6px)"></i><i class="blur" style="left:78.0px;top:22.9px;width:85.6px;height:10.5px;background:linear-gradient(90deg,#c2daf4 0.0px 10.7px,#a3c8ee 10.7px 21.4px,#96c0eb 21.4px 32.1px,#bed8f3 32.1px 42.8px,#c0d9f3 42.8px 53.5px,#97c1ec 53.5px 64.2px,#a1c6ed 64.2px 74.9px,#cde0f6 74.9px 85.6px)"></i><i class="blur" style="left:78.0px;top:33.4px;width:117.7px;height:10.8px;background:linear-gradient(90deg,#f1efee 0.0px 10.7px,#efeeed 10.7px 21.4px,#f5f2f0 21.4px 32.1px,#f3f0ef 32.1px 42.8px,#f2efee 42.8px 53.5px,#f2f0ee 53.5px 64.2px,#f5f2ef 64.2px 74.9px,#f1eeed 74.9px 85.6px,#e8e8ea 85.6px 96.3px,#e6e6e8 96.3px 107.0px,#f3f3f3 107.0px 117.7px)"></i><i class="blur" style="left:78.0px;top:44.2px;width:117.7px;height:10.5px;background:linear-gradient(90deg,#d9d9db 0.0px 10.7px,#cacbcf 10.7px 21.4px,#d4d5d8 21.4px 32.1px,#d2d3d6 32.1px 42.8px,#d6d6d9 42.8px 53.5px,#d4d4d7 53.5px 64.2px,#cfd0d4 64.2px 74.9px,#d6d6d9 74.9px 85.6px,#d5d5d8 85.6px 96.3px,#d2d3d7 96.3px 107.0px,#e9e9eb 107.0px 117.7px)"></i></div><span class="t b" style="left:329.73px;top:12.20px;font-size:15.5px;line-height:21px;height:21px">1</span><span class="t red" style="left:346.63px;top:12.20px;font-size:15px;line-height:21px;height:21px;letter-spacing:0.158px">-66.67%</span><svg class="spark" style="left:329.7px;top:33.3px" width="291" height="29" viewBox="0 0 291 29"><path d="M0.0 21.0L211.3 21.0L212.5 0.5L213.2 0.5L214.3 21.0L214.3 21L0.0 21Z" fill="#2bb3ff" stroke="#2bb3ff" stroke-width="1.0" stroke-linejoin="round" clip-path="url(#ab)"/><path d="M0 21H290.4" stroke="#2bb3ff" stroke-width="1.2" fill="none"/></svg><span class="t b na" style="left:646.23px;top:12.20px;font-size:15.5px;line-height:21px;height:21px;letter-spacing:0.338px">n/a</span><svg class="spark" style="left:646.2px;top:33.3px" width="291" height="29" viewBox="0 0 291 29"><path d="M11.9 21.0L13.1 16.5L17.1 16.5L18.4 20.0L19.7 16.0L21.3 16.0L22.0 16.8L24.6 16.5L25.9 21.0L48.1 21.0L49.7 16.5L50.3 16.5L51.5 21.0L52.8 21.0L53.7 16.5L57.2 16.5L58.4 21.0L59.7 21.0L61.4 11.2L62.8 11.2L64.0 19.0L64.7 16.5L66.8 16.5L67.9 21.0L73.8 21.0L75.3 16.5L75.9 16.5L77.1 21.0L82.2 21.0L83.4 16.5L84.6 16.5L85.8 21.0L92.5 21.0L93.7 16.5L97.2 16.5L98.1 21.0L109.7 21.0L110.6 16.5L114.1 16.5L115.0 21.0L124.0 21.0L125.3 16.5L126.1 16.5L127.2 21.0L128.4 21.0L129.8 16.5L130.8 16.5L131.9 21.0L159.0 21.0L160.0 16.5L161.4 16.5L162.5 21.0L203.1 21.0L204.3 16.2L205.9 15.8L206.4 0.5L207.9 0.5L208.4 15.8L209.9 16.2L210.9 21.0L282.8 21.0L284.0 16.5L285.3 16.5L286.5 21.0L286.5 21L11.9 21Z" fill="#2bb3ff" stroke="#2bb3ff" stroke-width="0.55" stroke-linejoin="round" clip-path="url(#ab)"/><path d="M0 21H290.4" stroke="#2bb3ff" stroke-width="1.2" fill="none"/></svg><span class="t b" style="left:962.93px;top:12.20px;font-size:15.5px;line-height:21px;height:21px;letter-spacing:-0.286px">13</span><span class="t red" style="left:989.43px;top:12.20px;font-size:15px;line-height:21px;height:21px;letter-spacing:0.424px">-98.93%</span><svg class="spark" style="left:962.9px;top:33.3px" width="291" height="29" viewBox="0 0 291 29"><path d="M0.0 21.0L20.0 21.0L21.0 16.2L22.2 16.2L23.2 21.0L60.9 21.0L61.8 0.5L64.0 0.5L64.9 21.0L205.4 21.0L206.4 0.5L208.0 0.5L209.0 21.0L209.0 21L0.0 21Z" fill="#2bb3ff" stroke="#2bb3ff" stroke-width="1.0" stroke-linejoin="round" clip-path="url(#ab)"/><path d="M0 21H290.4" stroke="#2bb3ff" stroke-width="1.2" fill="none"/></svg><span class="t b na" style="left:1279.43px;top:12.20px;font-size:15.5px;line-height:21px;height:21px;letter-spacing:0.338px">n/a</span><svg class="spark" style="left:1279.4px;top:33.3px" width="283" height="29" viewBox="0 0 283 29"><path d="M0.0 21.0L18.9 21.0L19.9 11.0L21.5 11.0L22.5 21.0L53.1 21.0L54.1 11.0L55.7 11.0L56.7 21.0L59.1 21.0L60.1 0.5L61.9 0.5L62.9 21.0L199.1 21.0L200.2 13.8L201.6 13.8L202.7 21.0L202.7 21L0.0 21Z" fill="#2bb3ff" stroke="#2bb3ff" stroke-width="1.0" stroke-linejoin="round" clip-path="url(#ab)"/><path d="M0 21H282.2" stroke="#2bb3ff" stroke-width="1.2" fill="none"/></svg></div></section>
<section class="card" style="top:414.5px;height:154.5px"><h2 style="font-weight:normal;font-size:inherit"><span class="t b" style="left:22.04px;top:10.60px;font-size:17px;line-height:23px;height:23px;letter-spacing:0.419px">Instagram</span></h2><div class="thead"><div class="th first" style="left:0px;width:316.4px"><span class="t" style="left:22.08px;top:12.40px;font-size:13px;line-height:19px;height:19px;letter-spacing:0.232px">Business profile</span></div><div class="th sorted" style="left:316.4px;width:316.5px"><span class="t" style="left:13.58px;top:12.40px;font-size:13px;line-height:19px;height:19px;letter-spacing:0.359px">New followers</span><svg class="abs" style="left:104.6px;top:12.7px" width="19" height="16" viewBox="0 0 19 16"><g fill="none" stroke-linecap="round" stroke-linejoin="round"><path d="M.9 5.300h6.900M2.900 8.200h4.900M4.900 11.100h2.900" stroke="#9a9dab" stroke-width="1.500"/><path d="M13.300 14.600V1.400M9.500 5.100l3.800-3.900 3.800 3.900" stroke="#858997" stroke-width="1.500"/></g></svg></div><div class="th nb" style="left:632.9px;width:316.7px"><span class="t" style="left:12.18px;top:12.40px;font-size:13px;line-height:19px;height:19px;letter-spacing:0.314px">Profile reach</span><svg class="abs" style="left:94.8px;top:12.7px" width="19" height="16" viewBox="0 0 19 16"><g fill="none" stroke-linecap="round" stroke-linejoin="round"><path d="M.9 5.300h6.900M2.900 8.200h4.900M4.900 11.100h2.900" stroke="#b0b3bf" stroke-width="1.500"/><path d="M13.300 14.600V1.400M9.500 5.100l3.800-3.900 3.800 3.900" stroke="#a3a6b3" stroke-width="1.500"/></g></svg></div><div class="th" style="left:949.6px;width:316.5px"><span class="t" style="left:12.18px;top:12.40px;font-size:13px;line-height:19px;height:19px;letter-spacing:0.346px">Profile interactions</span><svg class="abs" style="left:131.9px;top:12.7px" width="19" height="16" viewBox="0 0 19 16"><g fill="none" stroke-linecap="round" stroke-linejoin="round"><path d="M.9 5.300h6.900M2.900 8.200h4.900M4.900 11.100h2.900" stroke="#b0b3bf" stroke-width="1.500"/><path d="M13.300 14.600V1.400M9.500 5.100l3.800-3.900 3.800 3.900" stroke="#a3a6b3" stroke-width="1.500"/></g></svg></div><div class="th" style="left:1266.1px;width:317.2px"><span class="t" style="left:12.18px;top:12.40px;font-size:13px;line-height:19px;height:19px;letter-spacing:0.320px">Engagement rate (profile)</span><svg class="abs" style="left:173.2px;top:12.7px" width="19" height="16" viewBox="0 0 19 16"><g fill="none" stroke-linecap="round" stroke-linejoin="round"><path d="M.9 5.300h6.900M2.900 8.200h4.900M4.900 11.100h2.900" stroke="#b0b3bf" stroke-width="1.500"/><path d="M13.300 14.600V1.400M9.500 5.100l3.800-3.900 3.800 3.900" stroke="#a3a6b3" stroke-width="1.500"/></g></svg></div></div><div class="row r0" style="top:86.2px"><div class="abs" style="left:0;top:-0.5px"><div class="av txt" style="left:21.8px;top:13.1px;width:42.3px;height:42.3px"><span class="t" style="left:9.62px;top:8.80px;font-size:17px;line-height:23px;height:23px;letter-spacing:-0.941px">FO</span></div><svg class="badge" style="left:45.4px;top:36.4px" width="22.600" height="22.600" viewBox="0 0 22.600 22.600"><defs><radialGradient id="igg" gradientUnits="userSpaceOnUse" cx="5.500" cy="24.500" r="27"><stop offset="0" stop-color="#fdc35a"/><stop offset=".12" stop-color="#fba645"/><stop offset=".34" stop-color="#f1553b"/><stop offset=".56" stop-color="#d72d80"/><stop offset=".76" stop-color="#b42fb0"/><stop offset="1" stop-color="#8a38c8"/></radialGradient><radialGradient id="igb" gradientUnits="userSpaceOnUse" cx="-1" cy="1.500" r="13"><stop offset="0" stop-color="#3d62f2"/><stop offset=".55" stop-color="#5458e4" stop-opacity=".75"/><stop offset="1" stop-color="#6a4fd8" stop-opacity="0"/></radialGradient></defs><rect x="0" y="0" width="22.600" height="22.600" rx="6.400" fill="#fff"/><rect x="1.750" y="1.750" width="19.100" height="19.100" rx="5.100" fill="#fff" stroke="url(#igg)" stroke-width="2.300"/><circle cx="11.300" cy="11.300" r="4.550" fill="none" stroke="url(#igg)" stroke-width="1.900"/><circle cx="17.100" cy="5.700" r="1.150" fill="url(#igg)"/><rect x="1.750" y="1.750" width="19.100" height="19.100" rx="5.100" fill="none" stroke="url(#igb)" stroke-width="2.300"/><circle cx="11.300" cy="11.300" r="4.550" fill="none" stroke="url(#igb)" stroke-width="1.900"/><circle cx="17.100" cy="5.700" r="1.150" fill="url(#igb)"/></svg><i class="blur" style="left:78.0px;top:13.6px;width:85.6px;height:7.5px;background:linear-gradient(90deg,#cfe3f6 0.0px 10.7px,#e0edfa 10.7px 21.4px,#e4effb 21.4px 32.1px,#cfe2f6 32.1px 42.8px,#e3eefa 42.8px 53.5px,#e1edfa 53.5px 64.2px,#e1edfa 64.2px 74.9px,#edf4fc 74.9px 85.6px)"></i><i class="blur" style="left:78.0px;top:21.1px;width:85.6px;height:10.5px;background:linear-gradient(90deg,#b9d6f2 0.0px 10.7px,#9cc4ed 10.7px 21.4px,#bbd6f2 21.4px 32.1px,#9bc3ec 32.1px 42.8px,#9dc4ec 42.8px 53.5px,#9fc6ed 53.5px 64.2px,#97c0eb 64.2px 74.9px,#c0d9f3 74.9px 85.6px)"></i><i class="blur" style="left:78.0px;top:31.6px;width:85.6px;height:10.5px;background:linear-gradient(90deg,#f6f6f6 0.0px 10.7px,#ececec 10.7px 21.4px,#f4f4f4 21.4px 32.1px,#f5f4f4 32.1px 42.8px,#f6f4f2 42.8px 53.5px,#f6f5f4 53.5px 64.2px,#f7f6f5 64.2px 74.9px,#f5f5f5 74.9px 85.6px)"></i><i class="blur" style="left:78.0px;top:42.1px;width:96.3px;height:10.5px;background:linear-gradient(90deg,#d6d7da 0.0px 10.7px,#c4c4c8 10.7px 21.4px,#d3d3d6 21.4px 32.1px,#d2d2d6 32.1px 42.8px,#c8c8cc 42.8px 53.5px,#d2d2d6 53.5px 64.2px,#d0d0d4 64.2px 74.9px,#cfcfd3 74.9px 85.6px,#f3f3f4 85.6px 96.3px)"></i></div><span class="t gry" style="left:329.87px;top:13.40px;font-size:14.5px;line-height:20px;height:20px;letter-spacing:0.567px">No data available</span><span class="t b" style="left:646.72px;top:12.40px;font-size:15.5px;line-height:21px;height:21px;letter-spacing:1.055px">265</span><span class="t red" style="left:684.23px;top:12.40px;font-size:15px;line-height:21px;height:21px;letter-spacing:-0.726px">-21.13%</span><svg class="spark" style="left:646.2px;top:33.6px" width="291" height="29" viewBox="0 0 291 29"><path d="M-0.0 21.0L1.9 8.5L3.3 8.5L4.2 20.4L6.1 20.9L6.6 20.0L7.5 17.7L8.7 18.2L9.6 20.9L10.3 8.5L11.7 8.5L12.8 21.0L15.4 21.0L16.0 19.8L16.9 17.1L17.7 19.8L18.4 20.9L19.3 18.5L20.1 12.8L21.0 15.0L21.5 15.0L22.5 17.1L23.0 17.1L23.9 12.3L24.7 18.4L25.8 21.0L28.6 21.0L29.4 19.8L30.3 17.1L31.1 19.8L31.6 20.4L32.2 19.5L33.1 16.0L34.0 19.3L35.1 16.6L36.0 19.7L37.0 21.0L42.6 21.0L45.0 18.2L47.3 18.2L48.3 20.4L48.8 19.7L49.7 16.6L50.5 17.1L51.1 17.1L52.0 19.3L52.6 19.3L53.4 17.7L54.3 20.0L54.8 20.9L58.1 20.9L59.3 17.7L60.9 17.7L61.9 20.4L62.4 20.0L63.3 17.7L64.1 20.0L64.7 20.4L66.5 19.8L67.2 13.9L68.9 13.9L69.8 20.9L71.2 20.9L72.6 21.0L74.5 21.0L75.9 11.7L77.5 11.7L79.2 21.0L80.6 20.9L81.5 19.8L82.5 20.9L83.4 19.8L84.8 21.0L85.4 19.5L86.2 16.0L87.1 19.5L87.6 21.0L88.6 21.0L89.1 19.5L90.0 16.0L90.8 19.5L91.4 21.0L92.8 21.0L94.2 19.8L95.6 21.0L99.8 21.0L100.8 19.5L101.7 16.0L102.5 19.5L103.1 21.0L104.5 21.0L105.4 11.7L107.3 11.7L108.4 20.4L109.2 19.8L110.6 21.0L112.5 19.8L114.4 10.1L115.9 10.1L117.2 20.4L119.0 21.0L120.0 6.1L121.9 6.1L122.8 19.3L124.2 20.4L125.0 19.8L125.9 17.1L126.7 19.8L127.2 20.9L128.4 21.0L129.4 20.0L130.3 17.7L131.1 18.2L131.7 18.2L132.6 21.0L134.0 21.0L135.4 19.3L136.4 16.0L137.2 19.5L137.8 21.0L140.1 21.0L141.8 15.0L143.4 15.0L144.8 17.1L146.7 17.1L146.9 17.7L148.3 19.3L148.8 19.3L149.7 17.7L150.5 20.0L151.1 20.4L153.4 20.9L154.8 17.7L156.2 17.1L157.6 16.0L159.0 16.0L160.0 19.3L160.9 16.0L161.8 18.2L162.3 18.2L163.7 20.4L164.9 15.0L165.8 19.2L166.3 19.3L167.5 21.0L168.9 21.0L169.8 19.8L170.9 21.0L172.2 20.4L173.6 20.4L175.0 19.8L175.9 21.0L178.3 21.0L179.3 19.2L180.1 15.0L181.1 17.1L182.5 21.0L183.7 17.1L184.4 13.3L186.2 13.3L186.9 21.0L189.0 21.0L190.3 19.3L191.4 21.0L192.8 21.0L193.3 19.5L194.2 16.0L195.3 20.4L196.5 19.8L197.8 21.0L199.8 21.0L201.7 19.8L203.6 20.4L204.7 18.2L206.4 18.2L207.3 20.4L208.4 19.3L209.4 16.0L210.6 20.4L211.5 18.7L212.1 18.7L212.9 17.1L213.8 18.2L214.4 18.2L214.9 18.2L215.8 16.6L216.7 20.4L217.8 15.5L220.0 15.5L220.9 21.0L222.5 21.0L223.1 15.5L224.7 15.5L225.3 20.4L227.5 20.9L228.9 20.4L229.4 19.5L230.3 16.0L231.5 16.6L233.1 18.2L234.5 20.4L236.4 21.0L238.3 20.4L240.1 19.8L241.2 19.8L242.0 18.2L242.9 21.0L244.4 20.9L245.2 19.3L246.0 15.5L247.2 19.3L248.6 20.4L250.0 19.3L251.4 21.0L252.8 21.0L254.2 19.3L255.0 19.3L255.9 15.5L257.0 20.4L259.4 20.4L260.8 20.9L262.2 21.0L264.5 21.0L266.4 20.9L269.2 20.4L271.5 21.0L272.5 21.0L277.6 21.0L279.5 20.4L280.5 19.7L281.4 16.6L282.2 18.7L282.8 18.7L284.2 20.9L285.6 19.8L287.0 21.0L287.9 19.3L288.9 21.0L289.6 18.7L290.5 21.0L290.5 21L-0.0 21Z" fill="#2bb3ff" stroke="#2bb3ff" stroke-width="0.55" stroke-linejoin="round" clip-path="url(#ab)"/><path d="M0 21H290.4" stroke="#2bb3ff" stroke-width="1.2" fill="none"/></svg><span class="t b" style="left:963.42px;top:12.40px;font-size:15.5px;line-height:21px;height:21px;letter-spacing:1.230px">26</span><span class="t grn" style="left:991.80px;top:12.40px;font-size:15px;line-height:21px;height:21px;letter-spacing:0.103px">+73.33%</span><svg class="spark" style="left:962.9px;top:33.6px" width="291" height="29" viewBox="0 0 291 29"><path d="M0.0 21.0L5.8 21.0L7.0 18.4L9.0 18.4L10.2 21.0L15.3 21.0L16.9 17.1L17.5 17.1L19.1 21.0L31.7 21.0L33.3 16.8L33.9 16.8L35.5 21.0L43.2 21.0L44.8 16.8L45.4 16.8L47.0 21.0L66.3 21.0L67.2 14.0L69.2 14.0L70.1 21.0L74.8 21.0L76.4 13.0L77.0 13.0L78.6 21.0L77.1 21.0L78.2 18.5L79.0 18.5L80.1 21.0L116.5 21.0L118.1 17.1L118.7 17.1L120.3 21.0L125.0 21.0L126.6 16.8L127.2 16.8L128.8 21.0L163.5 21.0L165.1 17.1L165.7 17.1L167.3 21.0L178.8 21.0L179.8 8.8L181.6 8.8L182.6 21.0L211.8 21.0L212.8 16.6L216.6 16.6L217.6 21.0L240.6 21.0L241.6 14.0L243.4 14.0L244.4 21.0L244.4 21L0.0 21Z" fill="#2bb3ff" stroke="#2bb3ff" stroke-width="1.0" stroke-linejoin="round" clip-path="url(#ab)"/><path d="M0 21H290.4" stroke="#2bb3ff" stroke-width="1.2" fill="none"/></svg><span class="t b" style="left:1280.16px;top:12.40px;font-size:15.5px;line-height:21px;height:21px;letter-spacing:0.128px">3.69%</span><span class="t grn" style="left:1335.20px;top:12.40px;font-size:15px;line-height:21px;height:21px;letter-spacing:-0.161px">+1.63</span><svg class="spark" style="left:1279.4px;top:33.6px" width="283" height="29" viewBox="0 0 283 29"><path d="M0.0 21.0L5.7 21.0L7.4 10.3L8.8 10.3L10.5 21.0L14.8 21.0L15.9 16.0L17.5 16.0L18.6 21.0L30.8 21.0L31.9 16.0L33.3 16.0L34.4 21.0L41.9 21.0L42.9 16.0L44.7 16.0L45.7 21.0L64.1 21.0L65.1 14.9L67.0 14.9L68.0 21.0L72.8 21.0L74.1 16.6L74.7 16.6L76.0 21.0L74.7 21.0L75.9 19.0L76.5 19.0L77.7 21.0L112.8 21.0L113.8 10.3L115.6 10.3L116.6 21.0L121.1 21.0L122.1 10.3L123.9 10.3L124.9 21.0L158.8 21.0L159.9 18.0L161.3 18.0L162.4 21.0L173.5 21.0L174.6 2.5L176.2 2.5L177.3 21.0L205.7 21.0L206.7 14.3L207.7 14.3L208.7 21.0L207.7 21.0L208.6 10.3L209.9 10.3L210.8 21.0L233.4 21.0L234.5 4.2L236.1 4.2L237.2 21.0L237.2 21L0.0 21Z" fill="#2bb3ff" stroke="#2bb3ff" stroke-width="1.0" stroke-linejoin="round" clip-path="url(#ab)"/><path d="M0 21H282.2" stroke="#2bb3ff" stroke-width="1.2" fill="none"/></svg></div></section>
<section class="card" style="top:586.8px;height:223.7px"><h2 style="font-weight:normal;font-size:inherit"><span class="t b" style="left:22.04px;top:10.30px;font-size:17px;line-height:23px;height:23px;letter-spacing:0.142px">LinkedIn</span></h2><div class="thead"><div class="th first" style="left:0px;width:316.4px"><span class="t" style="left:22.49px;top:12.10px;font-size:13px;line-height:19px;height:19px;letter-spacing:0.242px">Company page</span></div><div class="th sorted" style="left:316.4px;width:316.5px"><span class="t" style="left:13.58px;top:12.10px;font-size:13px;line-height:19px;height:19px;letter-spacing:0.359px">New followers</span><svg class="abs" style="left:104.6px;top:12.7px" width="19" height="16" viewBox="0 0 19 16"><g fill="none" stroke-linecap="round" stroke-linejoin="round"><path d="M.9 5.300h6.900M2.900 8.200h4.900M4.900 11.100h2.900" stroke="#9a9dab" stroke-width="1.500"/><path d="M13.300 14.600V1.400M9.500 5.100l3.800-3.900 3.800 3.900" stroke="#858997" stroke-width="1.500"/></g></svg></div><div class="th nb" style="left:632.9px;width:316.7px"><span class="t" style="left:12.18px;top:12.10px;font-size:13px;line-height:19px;height:19px;letter-spacing:0.287px">Posts reach (organic)</span><svg class="abs" style="left:147.4px;top:12.7px" width="19" height="16" viewBox="0 0 19 16"><g fill="none" stroke-linecap="round" stroke-linejoin="round"><path d="M.9 5.300h6.900M2.900 8.200h4.900M4.900 11.100h2.900" stroke="#b0b3bf" stroke-width="1.500"/><path d="M13.300 14.600V1.400M9.500 5.100l3.800-3.900 3.800 3.900" stroke="#a3a6b3" stroke-width="1.500"/></g></svg></div><div class="th" style="left:949.6px;width:316.5px"><span class="t" style="left:12.18px;top:12.10px;font-size:13px;line-height:19px;height:19px;letter-spacing:0.291px">Posts engagements (organic)</span><svg class="abs" style="left:195.5px;top:12.7px" width="19" height="16" viewBox="0 0 19 16"><g fill="none" stroke-linecap="round" stroke-linejoin="round"><path d="M.9 5.300h6.900M2.900 8.200h4.900M4.900 11.100h2.900" stroke="#b0b3bf" stroke-width="1.500"/><path d="M13.300 14.600V1.400M9.500 5.100l3.800-3.900 3.800 3.900" stroke="#a3a6b3" stroke-width="1.500"/></g></svg></div><div class="th" style="left:1266.1px;width:317.2px"><span class="t" style="left:12.18px;top:12.10px;font-size:13px;line-height:19px;height:19px;letter-spacing:0.294px">Engagement rate (organic)</span><svg class="abs" style="left:179.8px;top:12.7px" width="19" height="16" viewBox="0 0 19 16"><g fill="none" stroke-linecap="round" stroke-linejoin="round"><path d="M.9 5.300h6.900M2.900 8.200h4.900M4.900 11.100h2.900" stroke="#b0b3bf" stroke-width="1.500"/><path d="M13.300 14.600V1.400M9.500 5.100l3.800-3.900 3.800 3.900" stroke="#a3a6b3" stroke-width="1.500"/></g></svg></div></div><div class="row r0" style="top:86.2px"><div class="abs" style="left:0;top:-0.5px"><div class="av txt" style="left:21.8px;top:13.1px;width:42.3px;height:42.3px"><span class="t" style="left:9.62px;top:9.50px;font-size:17px;line-height:23px;height:23px;letter-spacing:-0.974px">DE</span></div><svg class="badge" style="left:44.8px;top:36.7px" width="23" height="22.400" viewBox="0 0 23 22.400"><rect x="0" y="0" width="23" height="22.400" rx="2.200" fill="#fff"/><rect x=".6" y=".6" width="21.800" height="21.200" rx="1.600" fill="#0a66c2"/><circle cx="5.500" cy="5.700" r="1.950" fill="#fff"/><rect x="3.800" y="9.100" width="3.400" height="9.700" fill="#fff"/><path d="M9.200 9.100h3.250v1.350c.5-.85 1.600-1.600 3.150-1.600 3.300 0 3.900 2.100 3.900 4.900v5.050h-3.400v-4.500c0-1.100-.02-2.450-1.500-2.450-1.500 0-1.750 1.150-1.750 2.350v4.600h-3.400z" fill="#fff"/></svg><i class="blur" style="left:76.0px;top:16.4px;width:156.6px;height:18.5px;background:linear-gradient(90deg,#e3eefa 0.0px 11.0px,#b5d2f0 11.0px 29.8px,#c5dbf3 29.8px 48.6px,#b6d3f0 48.6px 67.4px,#c9def5 67.4px 86.2px,#c8ddf4 86.2px 105.0px,#b4d2f0 105.0px 123.8px,#c2d9f3 123.8px 142.6px,#fafcfe 142.6px 156.6px)"></i><i class="blur" style="left:76.0px;top:34.9px;width:105.0px;height:18.0px;background:linear-gradient(90deg,#e3e7ee 0.0px 11.0px,#dadadc 11.0px 29.8px,#e3e3e5 29.8px 48.6px,#e0e0e2 48.6px 67.4px,#e1e1e3 67.4px 86.2px,#fafafa 86.2px 105.0px)"></i><i class="blur" style="left:76.0px;top:52.9px;width:156.6px;height:24.1px;background:linear-gradient(90deg,#f9fbfe 0.0px 11.0px,#fefcfc 11.0px 29.8px,#fefdfd 29.8px 48.6px,#fdfcfc 48.6px 67.4px,#fefdfd 67.4px 86.2px,#ffffff 86.2px 105.0px,#ffffff 105.0px 123.8px,#ffffff 123.8px 142.6px,#ffffff 142.6px 156.6px)"></i></div><span class="t b" style="left:330.22px;top:13.10px;font-size:15.5px;line-height:21px;height:21px;letter-spacing:-0.455px">74</span><span class="t gry" style="left:356.56px;top:13.10px;font-size:15px;line-height:21px;height:21px;letter-spacing:0.435px">no change</span><svg class="spark" style="left:329.7px;top:33.6px" width="291" height="29" viewBox="0 0 291 29"><path d="M0.0 15.9L8.4 15.9L9.8 14.4L11.2 15.9L15.4 15.9L16.7 14.4L17.8 15.9L19.2 15.9L20.4 18.1L21.1 14.1L22.0 15.9L22.9 15.9L23.9 18.1L24.8 15.9L25.5 14.1L26.2 15.9L34.2 15.9L35.1 14.4L36.1 16.9L36.7 14.4L37.9 15.6L42.2 15.6L44.0 14.4L45.0 15.9L46.4 16.4L47.3 15.9L48.7 14.1L49.8 15.9L51.1 18.1L52.0 15.9L74.0 15.9L75.2 14.4L75.9 16.9L76.7 13.9L77.6 15.9L79.5 15.9L80.6 18.4L81.5 15.9L82.5 14.4L83.6 15.9L87.6 15.9L88.8 14.4L90.0 15.9L92.3 15.9L93.3 14.4L94.7 14.7L96.1 15.9L100.3 16.4L101.2 18.4L102.2 15.9L105.4 15.9L106.7 14.1L107.8 15.9L108.7 18.1L109.7 15.9L110.6 15.9L111.3 18.1L112.0 15.9L115.3 15.9L116.4 18.1L117.3 15.9L121.8 15.9L123.0 17.9L123.7 15.9L125.4 11.4L126.7 15.9L133.1 15.9L134.0 17.4L135.9 17.4L137.8 14.4L139.7 14.9L140.1 17.9L141.3 11.4L142.5 17.9L143.4 13.9L144.8 15.9L146.2 14.9L147.2 17.9L148.1 15.9L148.3 18.4L149.2 15.9L152.5 15.9L153.4 17.9L154.8 14.4L156.2 15.9L162.3 15.9L163.7 14.4L165.1 15.9L168.4 15.9L169.5 18.1L170.5 15.9L180.1 15.9L181.3 14.4L182.3 15.9L182.9 16.4L184.2 13.9L185.1 16.4L185.8 15.9L186.7 14.4L187.9 15.9L190.4 15.9L191.7 18.1L192.8 15.9L196.1 15.9L197.3 18.1L198.4 15.9L199.8 15.9L201.0 14.4L202.2 15.9L203.1 15.9L204.0 18.1L205.2 15.9L212.5 15.9L213.2 10.4L214.8 10.4L215.5 15.9L216.7 13.9L217.6 10.9L218.1 0.9L219.8 0.9L220.4 15.9L223.7 15.9L224.5 10.4L226.1 10.4L226.7 15.9L235.9 15.9L236.7 11.4L238.3 11.4L238.9 15.9L242.0 15.9L243.9 11.4L245.8 15.9L248.1 16.4L249.0 14.4L250.0 14.9L250.6 18.9L251.4 13.9L252.3 15.9L253.5 12.9L254.2 16.9L255.1 15.9L257.0 15.4L258.4 14.4L259.3 13.4L260.3 15.9L266.8 15.9L267.8 14.4L268.7 18.4L269.7 13.9L270.4 18.4L271.3 14.4L272.5 15.9L273.4 14.9L274.3 15.9L278.1 15.9L279.5 14.4L280.4 15.9L281.8 15.4L283.7 13.4L285.1 14.9L286.1 15.9L287.0 18.4L287.9 14.4L289.3 14.9L290.5 15.9L290.5 15.9L0.0 15.9Z" fill="#2bb3ff" stroke="#2bb3ff" stroke-width="1.1" stroke-linejoin="round"/><path d="M0 15.9H290.4" stroke="#2bb3ff" stroke-width="1.6" fill="none"/></svg><span class="t b na" style="left:646.23px;top:13.10px;font-size:15.5px;line-height:21px;height:21px;letter-spacing:0.338px">n/a</span><svg class="spark" style="left:646.2px;top:33.6px" width="291" height="29" viewBox="0 0 291 29"><path d="M-0.0 21.0L3.3 15.5L5.6 20.0L7.5 17.5L8.9 17.5L10.6 14.5L11.7 17.0L12.6 20.5L14.0 20.0L15.3 10.0L16.4 11.0L17.8 16.0L19.7 20.0L20.9 16.0L22.5 18.0L24.4 19.0L26.2 20.5L28.1 16.0L29.5 20.5L30.4 14.5L31.9 20.5L33.7 16.5L34.7 19.0L35.9 15.5L37.5 20.0L39.4 20.5L40.3 10.5L41.7 12.5L43.6 15.0L45.9 20.5L47.8 15.5L50.1 18.5L52.0 20.5L55.3 18.0L56.7 19.0L57.6 17.0L58.6 20.5L60.4 17.5L62.3 18.5L64.2 20.0L66.5 20.5L68.4 16.5L70.8 20.5L72.2 20.0L74.0 16.5L75.3 19.0L76.4 18.5L78.7 20.7L79.7 15.0L81.1 6.0L81.8 6.0L82.9 15.0L84.8 16.0L86.2 14.5L87.2 15.5L88.6 13.0L90.4 20.5L91.6 20.0L93.3 14.0L95.1 17.0L97.5 19.5L99.4 16.5L100.8 16.0L102.6 20.0L104.0 20.5L105.4 17.0L106.6 13.0L107.3 20.5L108.7 6.5L109.7 6.5L110.3 20.5L111.5 13.0L112.9 10.5L114.8 16.0L116.7 20.5L118.1 17.0L119.3 13.0L120.3 14.0L121.4 11.5L122.8 18.0L124.2 20.5L125.6 17.0L126.5 6.5L127.2 6.5L127.9 16.0L129.4 20.5L130.8 18.0L132.2 16.5L133.4 18.0L134.5 17.5L135.9 20.0L137.3 20.0L138.7 14.0L140.1 15.0L141.5 19.0L142.9 20.5L144.6 13.0L146.7 13.0L146.9 20.5L148.3 20.0L149.7 20.0L151.1 16.0L152.0 18.0L152.9 10.0L153.9 11.0L155.8 20.5L157.6 19.5L159.0 16.0L160.4 15.5L162.5 20.5L163.7 9.0L165.3 5.5L165.9 16.0L167.0 15.0L168.4 18.0L169.8 20.5L171.2 17.0L173.1 19.5L175.9 20.0L177.8 17.0L179.2 19.0L180.6 17.5L182.0 20.0L183.1 13.5L184.4 17.5L186.7 16.5L188.1 20.5L190.0 16.0L191.4 17.0L192.8 16.0L194.7 20.5L196.5 16.0L197.9 17.0L199.1 15.0L201.2 20.5L203.1 16.0L204.3 9.0L205.9 9.5L207.3 15.0L208.7 19.0L211.1 10.0L212.5 12.0L214.4 20.5L216.2 11.5L217.2 15.0L218.1 11.5L220.0 18.0L221.9 20.5L223.3 15.0L225.1 14.0L226.5 20.0L228.4 18.5L230.3 18.5L231.9 15.5L233.1 20.5L235.4 18.5L237.3 10.0L238.7 8.0L239.7 8.0L240.3 19.0L241.5 12.0L242.9 12.5L244.8 18.0L246.5 20.0L248.1 12.0L249.0 18.0L250.4 15.0L252.1 14.0L253.7 20.5L255.1 15.0L256.5 16.0L258.4 14.5L260.0 20.5L262.2 16.0L263.6 15.0L265.4 20.5L267.1 17.0L268.7 12.0L270.1 16.0L272.0 20.5L273.4 16.0L274.8 18.0L276.2 16.0L277.6 18.0L279.0 15.5L280.3 20.5L281.9 13.0L283.3 15.0L284.4 13.0L285.6 16.0L286.8 20.5L287.8 10.5L288.7 13.0L289.8 11.5L290.5 12.0L290.5 21L-0.0 21Z" fill="#2bb3ff" fill-opacity=".16"/><path d="M-0.0 21.0L3.3 15.5L5.6 20.0L7.5 17.5L8.9 17.5L10.6 14.5L11.7 17.0L12.6 20.5L14.0 20.0L15.3 10.0L16.4 11.0L17.8 16.0L19.7 20.0L20.9 16.0L22.5 18.0L24.4 19.0L26.2 20.5L28.1 16.0L29.5 20.5L30.4 14.5L31.9 20.5L33.7 16.5L34.7 19.0L35.9 15.5L37.5 20.0L39.4 20.5L40.3 10.5L41.7 12.5L43.6 15.0L45.9 20.5L47.8 15.5L50.1 18.5L52.0 20.5L55.3 18.0L56.7 19.0L57.6 17.0L58.6 20.5L60.4 17.5L62.3 18.5L64.2 20.0L66.5 20.5L68.4 16.5L70.8 20.5L72.2 20.0L74.0 16.5L75.3 19.0L76.4 18.5L78.7 20.7L79.7 15.0L81.1 6.0L81.8 6.0L82.9 15.0L84.8 16.0L86.2 14.5L87.2 15.5L88.6 13.0L90.4 20.5L91.6 20.0L93.3 14.0L95.1 17.0L97.5 19.5L99.4 16.5L100.8 16.0L102.6 20.0L104.0 20.5L105.4 17.0L106.6 13.0L107.3 20.5L108.7 6.5L109.7 6.5L110.3 20.5L111.5 13.0L112.9 10.5L114.8 16.0L116.7 20.5L118.1 17.0L119.3 13.0L120.3 14.0L121.4 11.5L122.8 18.0L124.2 20.5L125.6 17.0L126.5 6.5L127.2 6.5L127.9 16.0L129.4 20.5L130.8 18.0L132.2 16.5L133.4 18.0L134.5 17.5L135.9 20.0L137.3 20.0L138.7 14.0L140.1 15.0L141.5 19.0L142.9 20.5L144.6 13.0L146.7 13.0L146.9 20.5L148.3 20.0L149.7 20.0L151.1 16.0L152.0 18.0L152.9 10.0L153.9 11.0L155.8 20.5L157.6 19.5L159.0 16.0L160.4 15.5L162.5 20.5L163.7 9.0L165.3 5.5L165.9 16.0L167.0 15.0L168.4 18.0L169.8 20.5L171.2 17.0L173.1 19.5L175.9 20.0L177.8 17.0L179.2 19.0L180.6 17.5L182.0 20.0L183.1 13.5L184.4 17.5L186.7 16.5L188.1 20.5L190.0 16.0L191.4 17.0L192.8 16.0L194.7 20.5L196.5 16.0L197.9 17.0L199.1 15.0L201.2 20.5L203.1 16.0L204.3 9.0L205.9 9.5L207.3 15.0L208.7 19.0L211.1 10.0L212.5 12.0L214.4 20.5L216.2 11.5L217.2 15.0L218.1 11.5L220.0 18.0L221.9 20.5L223.3 15.0L225.1 14.0L226.5 20.0L228.4 18.5L230.3 18.5L231.9 15.5L233.1 20.5L235.4 18.5L237.3 10.0L238.7 8.0L239.7 8.0L240.3 19.0L241.5 12.0L242.9 12.5L244.8 18.0L246.5 20.0L248.1 12.0L249.0 18.0L250.4 15.0L252.1 14.0L253.7 20.5L255.1 15.0L256.5 16.0L258.4 14.5L260.0 20.5L262.2 16.0L263.6 15.0L265.4 20.5L267.1 17.0L268.7 12.0L270.1 16.0L272.0 20.5L273.4 16.0L274.8 18.0L276.2 16.0L277.6 18.0L279.0 15.5L280.3 20.5L281.9 13.0L283.3 15.0L284.4 13.0L285.6 16.0L286.8 20.5L287.8 10.5L288.7 13.0L289.8 11.5L290.5 12.0" stroke="#2bb3ff" stroke-width="1.8" fill="none" stroke-linejoin="round"/></svg><span class="t b na" style="left:962.93px;top:13.10px;font-size:15.5px;line-height:21px;height:21px;letter-spacing:0.338px">n/a</span><svg class="spark" style="left:962.9px;top:33.6px" width="291" height="29" viewBox="0 0 291 29"><path d="M0.0 16.4L0.5 16.4L2.4 14.9L3.6 17.9L4.2 9.9L6.1 13.9L8.0 14.9L9.4 14.9L11.1 11.9L12.2 15.4L14.5 15.4L15.5 12.4L17.4 15.9L19.7 15.9L21.1 14.4L22.5 14.9L24.4 15.4L26.3 10.4L27.0 14.4L27.9 11.4L29.1 18.4L30.0 11.9L31.4 15.9L34.7 15.9L35.2 0.9L37.0 0.9L37.7 15.9L39.4 15.9L41.7 6.4L43.1 13.4L44.5 9.9L45.9 16.4L47.4 20.9L48.6 11.4L49.5 5.9L50.8 5.9L51.8 15.4L53.4 11.4L54.9 15.9L59.1 15.9L60.5 13.9L61.9 15.9L62.8 15.4L64.2 5.9L65.6 5.9L66.6 15.9L68.9 15.9L70.3 13.9L71.7 15.9L72.7 15.4L74.3 10.4L75.8 15.9L78.3 15.9L79.5 5.9L80.6 5.9L81.1 18.4L82.0 8.9L83.9 8.9L85.3 15.9L87.7 15.4L88.9 13.4L89.5 17.4L90.5 12.9L91.9 15.9L93.0 15.4L94.5 8.4L96.6 15.9L98.0 12.9L99.9 12.9L101.3 15.9L105.0 15.9L106.4 14.9L107.6 17.4L108.6 11.9L109.7 15.9L112.0 14.4L113.4 15.9L115.3 15.9L116.7 11.4L118.1 15.9L120.0 15.9L121.7 12.4L123.3 15.9L125.2 15.9L126.6 14.9L128.0 15.9L129.9 12.9L130.8 15.9L131.9 19.9L132.7 10.9L133.6 15.9L134.8 11.9L135.9 15.9L137.4 15.9L138.8 9.9L140.2 9.9L141.6 15.9L143.4 15.9L145.1 12.4L147.2 15.4L147.4 15.4L149.2 15.9L150.6 15.9L151.6 14.4L152.3 17.4L153.3 10.4L154.6 10.4L155.8 18.9L157.2 15.9L159.1 15.4L160.5 13.4L161.4 11.4L162.6 16.4L163.8 9.4L165.2 9.9L166.1 7.9L167.7 7.9L168.9 15.9L170.8 15.9L172.0 14.4L173.6 15.9L179.7 15.9L180.8 11.4L182.0 15.9L183.4 14.4L184.9 15.9L189.1 15.9L190.5 13.9L191.7 15.9L192.8 14.4L194.2 15.9L196.1 15.9L197.5 10.9L198.9 10.9L199.6 18.4L200.5 13.9L202.2 15.9L203.6 15.9L204.3 0.9L205.9 0.9L206.4 18.9L207.4 12.4L208.3 17.4L209.2 13.4L210.6 15.9L211.6 13.4L212.5 17.9L213.4 14.4L215.8 15.9L217.2 9.9L218.3 15.4L219.5 11.4L220.8 15.9L223.3 15.9L224.7 8.9L226.4 8.9L227.7 15.9L229.9 15.9L231.1 13.9L232.4 15.9L235.9 15.9L237.4 11.4L238.3 12.4L238.9 6.4L240.4 6.4L241.1 15.9L241.8 17.4L243.0 14.4L243.9 16.9L245.3 14.9L247.2 15.9L248.1 4.9L249.5 4.9L250.5 12.4L251.4 17.9L252.4 9.4L253.8 12.9L255.2 15.9L255.6 7.4L256.8 7.4L257.7 13.4L258.9 11.4L260.1 15.9L261.4 15.9L262.4 6.4L263.1 6.4L263.6 18.4L264.8 2.4L266.4 2.4L267.4 15.4L269.2 13.4L270.6 15.9L271.8 11.4L272.7 11.4L273.4 15.9L274.9 15.9L275.8 9.9L276.7 12.4L277.9 11.4L279.3 14.9L280.9 15.9L282.4 17.9L283.8 6.4L284.9 6.4L286.1 15.9L287.0 19.4L288.0 10.9L289.2 10.9L290.1 15.9L290.4 16.4L290.4 16.4L0.0 16.4Z" fill="#2bb3ff" stroke="#2bb3ff" stroke-width="1.1" stroke-linejoin="round"/><path d="M0 16.4H290.4" stroke="#2bb3ff" stroke-width="1.6" fill="none"/></svg><span class="t b na" style="left:1279.43px;top:13.10px;font-size:15.5px;line-height:21px;height:21px;letter-spacing:0.338px">n/a</span><svg class="spark" style="left:1279.4px;top:33.6px" width="283" height="29" viewBox="0 0 283 29"><path d="M0.0 15.4L2.2 15.4L3.7 15.4L5.0 11.9L6.3 15.4L8.2 15.4L10.5 15.4L13.4 15.2L13.7 15.4L14.8 14.6L15.9 15.4L17.5 15.4L20.4 15.2L22.2 15.4L25.4 15.4L25.7 15.4L26.8 13.4L27.9 15.4L28.4 15.2L30.4 15.4L32.2 15.4L34.0 15.4L35.1 13.6L36.2 15.4L37.1 15.2L39.0 15.4L40.3 10.9L41.6 15.4L44.0 15.1L45.1 15.4L46.2 13.9L47.4 15.4L47.8 15.4L48.7 12.4L49.6 15.4L50.1 15.2L50.7 15.4L51.8 11.4L52.9 15.4L56.2 15.4L59.3 14.8L61.0 15.4L62.4 13.2L63.6 15.4L65.1 14.8L67.0 15.1L68.3 15.4L69.4 14.4L70.5 15.4L71.9 15.4L74.0 15.2L76.0 15.4L77.2 13.9L78.2 15.4L78.6 15.7L81.9 14.8L84.4 15.1L87.1 15.4L90.4 15.4L92.1 15.4L94.7 15.1L96.8 15.4L99.1 14.8L101.2 14.8L103.1 15.4L104.8 15.4L106.2 15.4L107.3 14.4L108.4 15.4L110.5 14.8L113.5 15.4L115.6 15.4L117.7 15.4L119.3 15.7L121.0 15.4L123.8 15.4L124.6 15.4L125.8 7.9L127.0 15.4L127.8 17.4L128.6 15.4L130.4 15.1L133.5 15.2L136.1 15.2L137.8 14.8L139.6 15.1L141.7 15.4L143.9 15.4L146.0 15.4L148.2 15.1L150.1 15.4L151.3 19.9L152.5 15.4L153.0 15.4L155.6 15.1L158.0 15.4L159.1 14.4L160.2 15.4L162.0 15.4L163.6 15.4L166.5 14.8L169.2 15.4L171.8 14.8L174.2 15.4L176.3 15.4L178.1 14.8L180.1 15.1L182.8 15.4L185.2 15.4L187.5 15.1L189.1 15.1L191.4 15.7L194.5 15.2L196.4 15.4L198.0 15.4L198.7 15.4L199.8 13.9L200.9 15.4L202.0 13.9L203.1 15.4L204.2 15.4L206.0 15.4L209.1 15.4L211.6 14.8L213.9 15.7L216.6 15.2L218.5 15.4L219.6 13.4L220.7 15.4L221.8 15.4L224.1 15.2L226.6 15.4L228.8 15.7L231.1 15.7L232.0 15.4L233.1 13.2L234.2 15.4L235.7 15.7L238.7 15.2L240.7 15.1L241.3 15.4L242.4 14.4L243.5 15.4L243.9 15.4L246.8 15.4L247.9 14.2L249.0 15.4L250.2 15.7L250.5 15.4L251.6 13.9L252.7 15.4L255.2 15.4L256.2 15.4L257.5 11.9L258.8 15.4L260.8 15.4L262.6 15.4L263.6 13.9L264.8 15.4L266.5 14.8L267.2 15.4L268.3 14.4L269.4 15.4L272.0 15.4L274.6 15.4L275.7 14.4L276.8 15.4L278.2 15.4L279.2 15.4L280.3 14.2L281.4 15.4L282.2 15.4L282.2 15.4L0.0 15.4Z" fill="#2bb3ff" stroke="#2bb3ff" stroke-width="1.2" stroke-linejoin="round"/><path d="M0 15.4H282.2" stroke="#2bb3ff" stroke-width="1.6" fill="none"/></svg></div><div class="row r1" style="top:154.6px"><div class="abs" style="left:0;top:-0.7px"><div class="av txt" style="left:21.8px;top:13.1px;width:42.3px;height:42.3px"><span class="t" style="left:9.65px;top:9.30px;font-size:17px;line-height:23px;height:23px;letter-spacing:-1.451px">OP</span></div><svg class="badge" style="left:44.8px;top:36.7px" width="23" height="22.400" viewBox="0 0 23 22.400"><rect x="0" y="0" width="23" height="22.400" rx="2.200" fill="#fff"/><rect x=".6" y=".6" width="21.800" height="21.200" rx="1.600" fill="#0a66c2"/><circle cx="5.500" cy="5.700" r="1.950" fill="#fff"/><rect x="3.800" y="9.100" width="3.400" height="9.700" fill="#fff"/><path d="M9.200 9.100h3.250v1.350c.5-.85 1.600-1.600 3.150-1.600 3.300 0 3.900 2.100 3.900 4.900v5.050h-3.400v-4.500c0-1.100-.02-2.450-1.500-2.450-1.500 0-1.750 1.150-1.750 2.350v4.600h-3.400z" fill="#fff"/></svg><i class="blur" style="left:76.0px;top:-2.0px;width:156.6px;height:4.9px;background:linear-gradient(90deg,#fcfdfe 0.0px 11.0px,#fefdfd 11.0px 29.8px,#fefefe 29.8px 48.6px,#fefdfd 48.6px 67.4px,#fefefe 67.4px 86.2px,#ffffff 86.2px 105.0px,#ffffff 105.0px 123.8px,#ffffff 123.8px 142.6px,#ffffff 142.6px 156.6px)"></i><i class="blur" style="left:76.0px;top:2.9px;width:142.6px;height:19.0px;background:linear-gradient(90deg,#fafcfe 0.0px 11.0px,#e3effb 11.0px 29.8px,#e6f0fa 29.8px 48.6px,#e7f0fa 48.6px 67.4px,#e7f0fa 67.4px 86.2px,#e8f1fa 86.2px 105.0px,#e6eff9 105.0px 123.8px,#e9f2fb 123.8px 142.6px)"></i><i class="blur" style="left:76.0px;top:21.9px;width:156.6px;height:18.5px;background:linear-gradient(90deg,#e1ebf6 0.0px 11.0px,#b9cfe8 11.0px 29.8px,#b4d0ea 29.8px 48.6px,#cadcee 48.6px 67.4px,#bbd0e9 67.4px 86.2px,#cbddef 86.2px 105.0px,#c1d7ed 105.0px 123.8px,#cedeee 123.8px 142.6px,#fcfcfc 142.6px 156.6px)"></i><i class="blur" style="left:76.0px;top:40.4px;width:156.6px;height:15.2px;background:linear-gradient(90deg,#e3e9ed 0.0px 11.0px,#ebe6e4 11.0px 29.8px,#f0edec 29.8px 48.6px,#e6e5e4 48.6px 67.4px,#f7f3f1 67.4px 86.2px,#e9e8e7 86.2px 105.0px,#f8f5f3 105.0px 123.8px,#e8e7e6 123.8px 142.6px,#f6f6f6 142.6px 156.6px)"></i></div><span class="t b na" style="left:330.22px;top:12.70px;font-size:15.5px;line-height:21px;height:21px">0</span><span class="t gry" style="left:348.76px;top:12.70px;font-size:15px;line-height:21px;height:21px;letter-spacing:0.435px">no change</span><svg class="spark" style="left:329.7px;top:33.4px" width="291" height="29" viewBox="0 0 291 29"><path d="M0.0 10.6L62.8 10.6L63.9 0.4L64.5 0.4L65.5 10.6L146.9 10.6L147.9 20.8L148.6 20.8L149.7 10.6L290.4 10.6L290.4 10.6L0.0 10.6Z" fill="#2bb3ff" stroke="#2bb3ff" stroke-width="1.2" stroke-linejoin="round"/><path d="M0 10.6H290.4" stroke="#2bb3ff" stroke-width="1.6" fill="none"/></svg><span class="t b na" style="left:646.23px;top:12.70px;font-size:15.5px;line-height:21px;height:21px;letter-spacing:0.338px">n/a</span><svg class="spark" style="left:646.2px;top:33.4px" width="291" height="29" viewBox="0 0 291 29"><path d="M-0.0 21.0L12.6 21.0L13.6 13.5L15.3 13.5L16.2 21.0L32.3 21.0L33.3 10.0L35.3 10.0L36.5 21.0L42.2 21.0L43.1 11.0L44.7 11.0L45.4 18.0L46.9 0.5L48.4 0.5L49.7 16.0L51.1 21.0L52.8 21.0L54.1 13.5L55.6 20.0L56.7 20.0L58.1 17.0L59.3 21.0L61.2 21.0L62.3 15.5L64.7 15.5L65.6 6.0L67.5 6.0L68.9 20.0L70.8 17.5L71.7 15.5L75.0 15.5L76.2 21.0L78.3 21.0L79.2 18.5L81.5 18.0L82.2 11.0L84.1 11.0L85.3 19.0L86.2 18.0L89.0 18.0L90.0 21.0L91.9 21.0L93.1 13.0L94.2 17.0L94.9 14.5L97.5 21.0L104.0 21.0L106.9 13.5L109.2 21.0L117.2 21.0L118.6 18.5L120.0 18.0L121.2 14.5L122.8 20.0L124.2 19.5L124.9 16.5L125.9 19.5L126.8 16.5L128.1 21.0L139.2 21.0L140.9 16.5L142.0 21.0L143.4 21.0L144.4 16.5L145.3 19.0L146.2 16.0L146.9 17.0L148.1 21.0L152.2 21.0L153.7 16.5L155.0 21.0L166.3 21.0L167.8 16.5L169.1 21.0L179.2 21.0L180.7 16.5L182.2 21.0L196.8 21.0L198.2 16.5L199.6 21.0L204.3 21.0L205.9 16.5L207.3 21.0L229.4 21.0L230.3 16.5L231.7 16.5L232.6 21.0L254.7 21.0L255.3 15.5L257.5 15.5L258.4 21.0L268.4 21.0L269.9 16.5L271.5 21.0L274.1 21.0L275.0 18.0L276.9 18.0L277.8 21.0L283.1 21.0L284.7 16.5L286.3 21.0L286.3 21L-0.0 21Z" fill="#2bb3ff" stroke="#2bb3ff" stroke-width="0.55" stroke-linejoin="round" clip-path="url(#ab)"/><path d="M0 21H290.4" stroke="#2bb3ff" stroke-width="1.2" fill="none"/></svg><span class="t b na" style="left:962.93px;top:12.70px;font-size:15.5px;line-height:21px;height:21px;letter-spacing:0.338px">n/a</span><svg class="spark" style="left:962.9px;top:33.4px" width="291" height="29" viewBox="0 0 291 29"><path d="M0.0 15.7L25.2 15.7L32.8 15.7L33.5 5.2L35.2 5.2L36.2 14.7L37.2 16.7L38.3 11.7L39.0 13.7L39.6 18.2L40.5 10.7L41.4 17.2L42.0 9.7L43.1 9.7L43.6 16.7L44.5 12.2L45.5 15.7L46.5 14.2L47.9 10.7L49.1 7.2L50.3 14.7L51.3 15.7L52.7 15.7L53.7 16.7L54.6 19.7L55.5 14.2L56.1 15.7L61.6 15.7L62.2 0.7L64.4 1.2L64.9 19.2L66.1 18.7L66.8 14.7L67.8 11.7L69.2 15.7L72.6 15.7L73.5 10.2L74.7 10.2L75.4 15.7L78.8 15.7L80.5 13.7L81.2 15.2L82.6 14.7L83.0 5.7L84.2 5.7L84.9 13.7L85.4 8.2L86.4 9.2L87.1 12.7L87.8 10.7L88.8 11.2L89.8 15.7L92.6 15.7L93.6 14.7L94.6 15.7L120.4 15.7L121.5 14.7L122.5 15.7L127.0 15.7L128.0 16.7L129.0 15.7L135.2 15.7L255.1 15.7L256.2 11.6L257.3 15.7L290.4 15.7L290.4 15.7L0.0 15.7Z" fill="#2bb3ff" stroke="#2bb3ff" stroke-width="1.1" stroke-linejoin="round"/><path d="M0 15.7H290.4" stroke="#2bb3ff" stroke-width="1.6" fill="none"/></svg><span class="t b na" style="left:1279.43px;top:12.70px;font-size:15.5px;line-height:21px;height:21px;letter-spacing:0.338px">n/a</span><svg class="spark" style="left:1279.4px;top:33.4px" width="283" height="29" viewBox="0 0 283 29"><path d="M0.0 15.7L23.3 15.7L31.9 15.7L33.3 14.7L35.0 14.5L36.0 15.7L42.6 15.7L43.6 15.2L44.3 15.7L44.8 5.7L46.5 5.7L47.2 15.2L51.5 15.7L52.5 16.7L53.0 17.2L53.9 11.2L54.9 15.7L59.1 15.7L60.1 9.2L61.5 10.7L62.6 11.7L62.8 18.7L63.9 16.7L65.2 14.9L66.6 15.7L70.1 15.7L70.9 11.2L72.8 11.2L73.4 15.7L76.6 15.7L77.3 11.2L79.0 11.2L79.7 14.2L80.7 14.2L81.7 15.7L83.1 15.7L83.7 0.2L85.5 0.2L85.9 17.7L86.9 15.7L89.6 15.7L90.8 13.7L91.9 15.7L116.8 15.7L117.8 15.2L118.9 15.7L133.3 15.7L247.4 15.7L248.5 15.0L249.5 15.7L282.2 15.7L282.2 15.7L0.0 15.7Z" fill="#2bb3ff" stroke="#2bb3ff" stroke-width="1.1" stroke-linejoin="round"/><path d="M0 15.7H282.2" stroke="#2bb3ff" stroke-width="1.6" fill="none"/></svg></div></section>
</body></html>
